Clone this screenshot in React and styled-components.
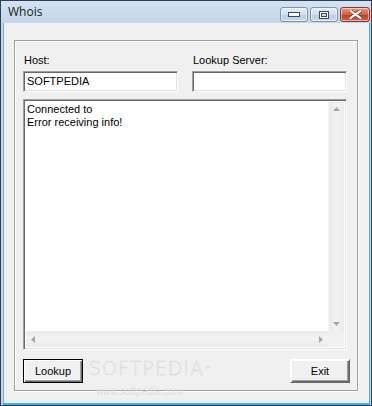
import React from "react";
import styled, { createGlobalStyle } from "styled-components";

const Global = createGlobalStyle`
  html, body { margin: 0; padding: 0; background: #fff; }
  body { font-family: "Liberation Sans", Arial, sans-serif; }
`;

const Window = styled.div`
  position: relative;
  width: 372px;
  height: 406px;
  box-sizing: border-box;
  border: 1px solid #2f3f53;
  background: linear-gradient(#d3e2f3, #bcd1e8 30px);
  display: flex;
  flex-direction: column;
  overflow: hidden;
`;

const TitleBar = styled.div`
  height: 22px;
  display: flex;
  align-items: flex-start;
  padding-left: 7px;
  padding-right: 1px;
`;

const Title = styled.div`
  flex: 1;
  font-family: "Open Sans", "Noto Sans", sans-serif;
  font-size: 12px;
  line-height: 22px;
  color: #1b1b1b;
`;

const CapButton = styled.div`
  box-sizing: border-box;
  width: ${(p) => p.w}px;
  height: 15px;
  margin-top: 6px;
  margin-left: 2px;
  border: 1px solid ${(p) => (p.close ? "#8a3a2c" : "#8193ab")};
  border-radius: 3px;
  background: ${(p) =>
    p.close
      ? "linear-gradient(#e99a86, #d55e44 50%, #c23a22 51%, #d0654a)"
      : "linear-gradient(#e6eef8, #cfdcec 50%, #bccde3 51%, #c9d8ea)"};
  box-shadow: inset 0 0 0 1px rgba(255, 255, 255, 0.5);
  display: flex;
  align-items: center;
  justify-content: center;
`;

const Frame = styled.div`
  flex: 1;
  display: flex;
  border-left: 2px solid #c4d7ec;
  border-right: 1px solid #c4d7ec;
  box-shadow: inset -1px 0 0 #37b4e4, inset 0 -2px 0 #37b4e4;
  padding: 0 1px 2px 0;
`;

const Client = styled.div`
  flex: 1;
  background: #f0f0f0;
  padding: 17px 11px 12px 10px;
  display: flex;
  border-left: 1px solid #8ea4bf;
`;

const Group = styled.div`
  flex: 1;
  border: 1px solid #a0a0a0;
  box-shadow: 1px 1px 0 #fff, inset 1px 1px 0 #fff;
  padding: 13px 10px 7px 8px;
  display: flex;
  flex-direction: column;
`;

const FieldRow = styled.div`
  display: flex;
  gap: 14px;
`;

const Field = styled.div`
  width: ${(p) => p.w}px;
  display: flex;
  flex-direction: column;
`;

const Label = styled.div`
  font-size: 11px;
  line-height: 13px;
  height: 13px;
  color: #000;
  padding-left: 1px;
  margin-bottom: 4px;
`;

const Sunken = styled.div`
  box-sizing: border-box;
  background: #fff;
  border-style: solid;
  border-width: 1px;
  border-color: #a0a0a0 #fff #fff #a0a0a0;
  box-shadow: inset 1px 1px 0 #696969, inset -1px -1px 0 #e3e3e3;
`;

const Input = styled(Sunken)`
  height: 21px;
  font-size: 11px;
  line-height: 19px;
  padding: 0 3px;
  color: #000;
`;

const Memo = styled(Sunken)`
  margin-top: 7px;
  height: 251px;
  display: grid;
  grid-template-columns: 1fr 16px;
  grid-template-rows: 1fr 16px;
  padding: 2px;
`;

const MemoText = styled.div`
  font-size: 11px;
  line-height: 13px;
  padding: 1px 1px;
  color: #000;
`;

const VScroll = styled.div`
  background: linear-gradient(90deg, #e8e8e8, #f2f2f2 40%, #ececec);
  border-left: 1px solid #f6f6f6;
  display: flex;
  flex-direction: column;
  justify-content: space-between;
  align-items: center;
  padding: 5px 0;
`;

const HScroll = styled.div`
  background: linear-gradient(#e8e8e8, #f2f2f2 40%, #ececec);
  display: flex;
  justify-content: space-between;
  align-items: center;
  padding: 0 5px;
`;

const Corner = styled.div`
  background: #f0f0f0;
`;

const ButtonRow = styled.div`
  margin-top: 9px;
  margin-right: -3px;
  display: flex;
  justify-content: space-between;
`;

const Button = styled.div`
  position: relative;
  z-index: 1;
  box-sizing: border-box;
  width: 60px;
  height: 24px;
  font-size: 11px;
  color: #000;
  display: flex;
  align-items: center;
  justify-content: center;
  background: #f0f0f0;
  border: 1px solid;
  border-color: ${(p) => (p.primary ? "#000" : "#fff #696969 #696969 #fff")};
  box-shadow: inset 1px 1px 0 #fff, inset -1px -1px 0 #696969,
    inset -2px -2px 0 #a0a0a0;
`;

const Watermark = styled.div`
  position: absolute;
  left: 88px;
  top: 356px;
  pointer-events: none;
  text-align: center;
`;

const WmBig = styled.div`
  font-family: "DejaVu Sans", sans-serif;
  font-size: 19px;
  font-weight: 300;
  letter-spacing: 1px;
  line-height: 22px;
  -webkit-text-stroke: 0.6px #dcdcdc;
  color: rgba(255, 255, 255, 0.35);
`;

const Tm = styled.sup`
  font-size: 6px;
  vertical-align: top;
  -webkit-text-stroke: 0;
  color: #d8d8d8;
`;

const WmSmall = styled.div`
  font-size: 10px;
  line-height: 12px;
  margin-top: 7px;
  margin-left: -22px;
  color: #dddddd;
`;

function Tri({ dir }) {
  const pts = {
    up: "0,4 3.5,0 7,4",
    down: "0,0 3.5,4 7,0",
    left: "4,0 0,3.5 4,7",
    right: "0,0 4,3.5 0,7",
  }[dir];
  const vertical = dir === "up" || dir === "down";
  return (
    <svg width={vertical ? 7 : 4} height={vertical ? 4 : 7}>
      <polygon points={pts} fill="#a6a6a6" />
    </svg>
  );
}

export default function App() {
  return (
    <>
      <Global />
      <Window>
        <TitleBar>
          <Title>Whois</Title>
          <CapButton w={28}>
            <svg width="12" height="6">
              <rect x="0.5" y="0.5" width="11" height="4" fill="#fff" stroke="#3a4a60" />
            </svg>
          </CapButton>
          <CapButton w={28}>
            <svg width="10" height="8">
              <rect x="0.5" y="0.5" width="9" height="7" fill="#fff" stroke="#3a4a60" />
              <rect x="2.5" y="2.5" width="5" height="3" fill="#cfdcec" stroke="#3a4a60" />
            </svg>
          </CapButton>
          <CapButton w={30} close>
            <svg width="13" height="9">
              <path
                d="M1.5 1 L11.5 8 M11.5 1 L1.5 8"
                stroke="#5a1a10"
                strokeWidth="3.4"
                strokeLinecap="round"
              />
              <path
                d="M1.5 1 L11.5 8 M11.5 1 L1.5 8"
                stroke="#fff"
                strokeWidth="2.2"
                strokeLinecap="round"
              />
            </svg>
          </CapButton>
        </TitleBar>
        <Frame>
          <Client>
            <Group>
              <FieldRow>
                <Field w={155}>
                  <Label>Host:</Label>
                  <Input>SOFTPEDIA</Input>
                </Field>
                <Field w={155}>
                  <Label>Lookup Server:</Label>
                  <Input />
                </Field>
              </FieldRow>
              <Memo>
                <MemoText>
                  Connected to
                  <br />
                  Error receiving info!
                </MemoText>
                <VScroll>
                  <Tri dir="up" />
                  <Tri dir="down" />
                </VScroll>
                <HScroll>
                  <Tri dir="left" />
                  <Tri dir="right" />
                </HScroll>
                <Corner />
              </Memo>
              <ButtonRow>
                <Button primary>Lookup</Button>
                <Button>Exit</Button>
              </ButtonRow>
            </Group>
          </Client>
        </Frame>
        <Watermark>
          <WmBig>
            SOFTPEDIA<Tm>™</Tm>
          </WmBig>
          <WmSmall>www.softpedia.com</WmSmall>
        </Watermark>
      </Window>
    </>
  );
}
